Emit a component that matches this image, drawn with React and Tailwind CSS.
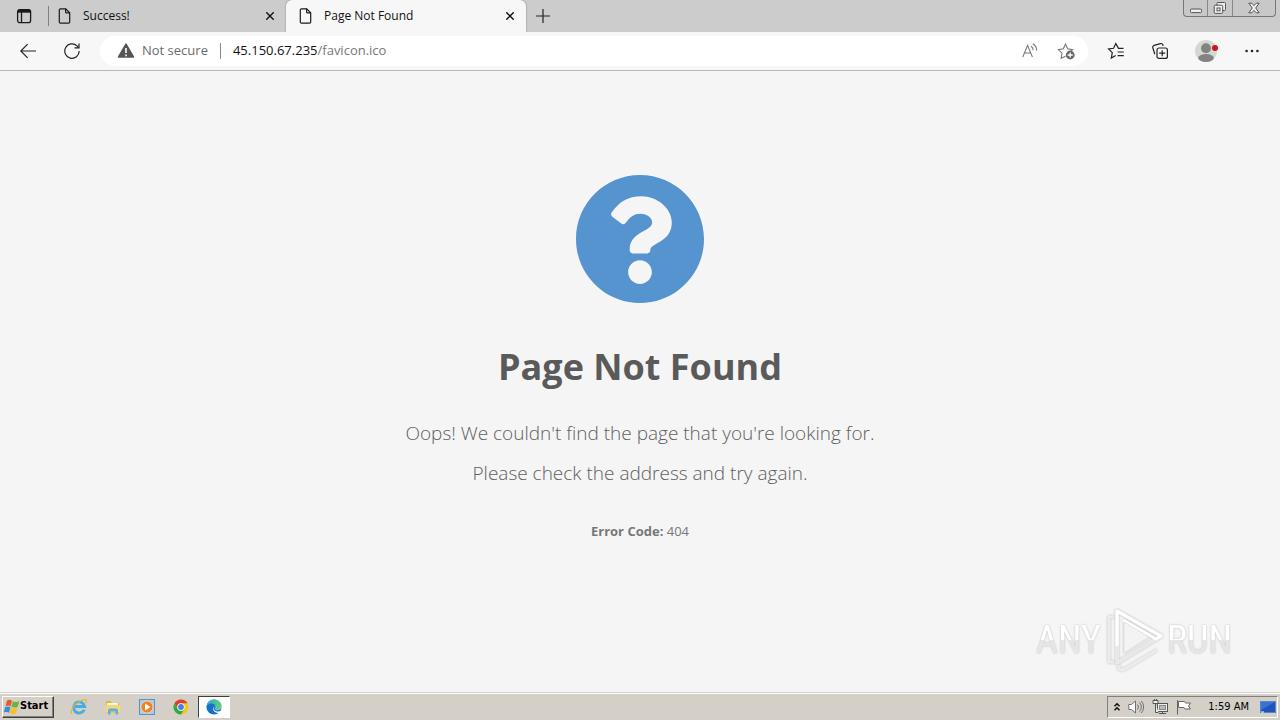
import React from "react";

const tabs = [
  { title: "Success!", active: false },
  { title: "Page Not Found", active: true },
];

function PageIcon() {
  return (
    <svg className="h-4 w-4 shrink-0" viewBox="0 0 16 16" fill="none" stroke="#1a1a1a" strokeWidth="1.2">
      <path d="M3.5.8h5.2l4 4v9.2a1.2 1.2 0 0 1-1.2 1.2h-8a1.2 1.2 0 0 1-1.2-1.2V2A1.2 1.2 0 0 1 3.5.8z" />
      <path d="M8.6.8v3.1a1 1 0 0 0 1 1h3.1" />
    </svg>
  );
}

function Tab({ title, active }) {
  return (
    <div
      className={
        active
          ? "flex h-8 w-60 items-center rounded-t-md bg-[#f7f7f7] px-2 pl-3 shadow-[0_0_2px_rgba(0,0,0,0.4)]"
          : "flex h-8 w-[237px] items-center px-2"
      }
    >
      <PageIcon />
      <span className="ml-2.5 flex-1 text-xs text-[#111]">{title}</span>
      <button aria-label={`Close ${title}`} className="flex h-4 w-4 items-center justify-center">
        <svg className="h-2 w-2" viewBox="0 0 8 8" stroke="#111" strokeWidth="1.4">
          <path d="M.3.3l7.4 7.4M7.7.3L.3 7.7" />
        </svg>
      </button>
    </div>
  );
}

function TabStrip() {
  return (
    <header className="flex h-8 items-start bg-[#cccccc]">
      <button aria-label="Tab actions" className="flex h-8 w-12 items-center justify-center">
        <svg className="h-4 w-4" viewBox="0 0 16 16" fill="none" stroke="#1a1a1a" strokeWidth="1.3">
          <rect x="1.6" y="1.6" width="13" height="13" rx="2.2" />
          <path d="M2 3.2h12.2" strokeWidth="3" />
          <path d="M5.5 4v10.4" />
        </svg>
      </button>
      <div className="mt-1.5 h-5 w-px bg-[#808080]" />
      <div className="flex">
        {tabs.map((tab) => (
          <Tab key={tab.title} {...tab} />
        ))}
      </div>
      <button aria-label="New tab" className="ml-px flex h-8 w-8 items-center justify-center">
        <svg className="h-3.5 w-3.5" viewBox="0 0 14 14" stroke="#222" strokeWidth="1.2">
          <path d="M7 0v14M0 7h14" />
        </svg>
      </button>
      <div className="ml-auto mr-1 flex h-[17px] rounded-b border border-t-0 border-[#777] bg-[#c8c8c8]">
        <button aria-label="Minimize" className="flex w-6 items-center justify-center border-r border-[#888]">
          <svg className="h-3.5 w-3.5" viewBox="0 0 14 14" fill="#eee" stroke="#555">
            <rect x="1.5" y="8" width="11" height="3.6" rx="1" />
          </svg>
        </button>
        <button aria-label="Restore" className="flex w-[25px] items-center justify-center border-r border-[#888]">
          <svg className="h-3.5 w-3.5" viewBox="0 0 14 14" fill="#eee" stroke="#555">
            <rect x="4" y="1.5" width="8.5" height="8" rx="1" />
            <rect x="1.2" y="4.2" width="8.5" height="8.2" rx="1" />
            <rect x="4" y="7" width="3" height="2.8" />
          </svg>
        </button>
        <button aria-label="Close window" className="flex w-[42px] items-center justify-center">
          <svg className="h-3 w-3" viewBox="0 0 12 12" fill="#eee" stroke="#555">
            <path d="M.8 1.2h3L6 3.6l2.2-2.4h3L7.7 6l3.5 4.8h-3L6 8.4l-2.2 2.4h-3L4.3 6z" />
          </svg>
        </button>
      </div>
    </header>
  );
}

function Toolbar() {
  return (
    <div className="flex h-[39px] items-center border-b border-[#b8b8b8] bg-[#f7f7f7]">
      <button aria-label="Back" className="ml-3 flex h-8 w-8 items-center justify-center">
        <svg className="h-4 w-4" viewBox="0 0 16 16" fill="none" stroke="#222" strokeWidth="1.2">
          <path d="M16 8H.8M7.6 1.2L.8 8l6.8 6.8" />
        </svg>
      </button>
      <button aria-label="Refresh" className="ml-3 flex h-8 w-8 items-center justify-center">
        <svg className="h-4 w-4" viewBox="0 0 16 16" fill="none" stroke="#222" strokeWidth="1.2">
          <path d="M15.2 8A7.2 7.2 0 1 1 13 2.9l1.6 1.7" />
          <path d="M15 .4v4.5h-4.5" />
        </svg>
      </button>
      <div className="ml-3 flex h-[30px] flex-1 items-center rounded-full bg-white pl-4 pr-3">
        <svg className="h-5 w-5" viewBox="0 0 20 20">
          <path d="M10 3.2L17.4 16H2.6z" fill="#555" stroke="#555" strokeWidth="1.6" strokeLinejoin="round" />
          <path d="M10 7v5M10 13.4v1.8" stroke="#fff" strokeWidth="1.6" />
        </svg>
        <span className="ml-1.5 text-[13px] text-[#6b6b6b]">Not secure</span>
        <div className="ml-3 h-4 w-px bg-[#8a8a8a]" />
        <div className="ml-3 flex-1 text-[13px] text-[#777]">
          <span className="text-[#111]">45.150.67.235</span>/favicon.ico
        </div>
        <button aria-label="Read aloud" className="flex h-5 w-5 items-center justify-center">
          <svg className="h-4 w-4" viewBox="0 0 16 16" fill="none" stroke="#777" strokeWidth="1.1">
            <path d="M.8 14L5.6 2.4 10.4 14M2.5 10h6.2" />
            <path d="M9 3.2a4.5 4.5 0 0 1 2.2 4M10.8.8a7.4 7.4 0 0 1 3.8 6.6" />
          </svg>
        </button>
        <button aria-label="Add to favorites" className="ml-4 flex h-5 w-5 items-center justify-center">
          <svg className="h-[18px] w-[18px]" viewBox="0 0 18 18" fill="none" stroke="#777" strokeWidth="1.1">
            <path d="M8.5 14.2l-4.3 2 .8-5L1.4 7.6l4.9-.8L8.5 2l2.2 4.8 4.9.8-1.6 1.6" />
            <circle cx="13.2" cy="13" r="4.4" fill="#666" stroke="none" />
            <path d="M13.2 10.4v5.2M10.6 13h5.2" stroke="#fff" strokeWidth="1.3" />
          </svg>
        </button>
      </div>
      <div className="mx-3 flex items-center gap-3">
        <button aria-label="Favorites" className="flex h-8 w-8 items-center justify-center">
          <svg className="h-[18px] w-[18px]" viewBox="0 0 18 18" fill="none" stroke="#222" strokeWidth="1.2">
            <path d="M16.5 6.4h-5L8.8 1.6 6.6 6.3l-5 .7 3.7 3.6-1 5.4 4.4-2.5" />
            <path d="M10.6 10h6.2M10.6 13.6h6.2" />
          </svg>
        </button>
        <button aria-label="Collections" className="flex h-8 w-8 items-center justify-center">
          <svg className="h-[18px] w-[18px]" viewBox="0 0 18 18" fill="none" stroke="#222" strokeWidth="1.2">
            <rect x="6" y="6" width="10.4" height="10.4" rx="2" />
            <path d="M11.2 8.2v6M8.2 11.2h6" />
            <path d="M3.8 12.2l-2-6.4a2 2 0 0 1 1.4-2.5l6.2-1.7a2 2 0 0 1 2.5 1.4l.2.9" />
          </svg>
        </button>
        <button aria-label="Profile" className="ml-0.5 flex h-8 w-8 items-center justify-center">
          <svg className="h-6 w-6" viewBox="0 0 24 24">
            <circle cx="12" cy="12" r="11" fill="#d3d8d3" />
            <circle cx="12" cy="9.2" r="5" fill="#858381" />
            <ellipse cx="12" cy="19" rx="7.8" ry="4" fill="#858381" />
            <circle cx="21" cy="9" r="3" fill="#d4101c" />
          </svg>
        </button>
        <button aria-label="Settings and more" className="ml-0.5 flex h-8 w-8 items-center justify-center">
          <svg className="h-4 w-4" viewBox="0 0 16 16" fill="#222">
            <circle cx="2.6" cy="8" r="1.3" />
            <circle cx="8" cy="8" r="1.3" />
            <circle cx="13.4" cy="8" r="1.3" />
          </svg>
        </button>
      </div>
    </div>
  );
}

function Watermark() {
  return (
    <div className="absolute bottom-5 right-12 flex items-center gap-1 font-['Liberation_Sans_Narrow','Roboto_Condensed','Liberation_Sans',sans-serif] text-[38px] leading-12 drop-shadow-[0_0_1px_rgba(0,0,0,0.22)]">
      <span className="bg-linear-to-b from-white from-50% to-[#e6e6e6] to-50% bg-clip-text text-transparent">ANY</span>
      <svg className="h-16 w-[58px]" viewBox="0 0 58 64" fill="none" strokeLinejoin="round">
        <path d="M9 9H4v45h5M14 57v4l4 1 34-20" stroke="#ececec" strokeWidth="3" />
        <path d="M12 3v52l44-27z" stroke="#e8e8e8" strokeWidth="4" />
        <path d="M12 38V3l44 25-5 3-33-19" stroke="#fff" strokeWidth="3" />
        <path d="M19 14v31l25-16z" fill="#f3f3f3" stroke="#e2e2e2" />
      </svg>
      <span className="bg-linear-to-b from-white from-50% to-[#e6e6e6] to-50% bg-clip-text text-transparent">RUN</span>
    </div>
  );
}

function ErrorPage() {
  return (
    <main className="relative flex flex-1 flex-col items-center bg-[#f5f5f5] pt-26 text-center">
      <svg className="h-32 w-32" viewBox="8 8 496 496" fill="#5594cf">
        <path d="M504 256c0 136.997-111.043 248-248 248S8 392.997 8 256C8 119.083 119.043 8 256 8s248 111.083 248 248zM262.655 90c-54.497 0-89.255 22.957-116.549 63.758-3.536 5.286-2.353 12.415 2.715 16.258l34.699 26.31c5.205 3.947 12.621 3.008 16.665-2.122 17.864-22.658 30.113-35.797 57.303-35.797 20.429 0 45.698 13.148 45.698 32.958 0 14.976-12.363 22.667-32.534 33.976C247.128 238.528 216 254.941 216 296v4c0 6.627 5.373 12 12 12h56c6.627 0 12-5.373 12-12v-1.333c0-28.462 83.186-29.647 83.186-106.667 0-58.002-60.165-102-116.531-102zM256 338c-25.365 0-46 20.635-46 46 0 25.364 20.635 46 46 46s46-20.636 46-46c0-25.365-20.635-46-46-46z" />
      </svg>
      <h1 className="mt-9 text-4xl font-bold leading-14 text-[#5a5a5a]">Page Not Found</h1>
      <p className="mt-[18px] text-[19px] font-light leading-10 text-[#606060]">
        Oops! We couldn't find the page that you're looking for.
        <br />
        Please check the address and try again.
      </p>
      <p className="mt-7 text-[13px] leading-5 text-[#777]">
        <b>Error Code:</b> 404
      </p>
      <Watermark />
    </main>
  );
}

function WindowsLogo() {
  return (
    <svg className="h-4 w-4 shrink-0" viewBox="0 0 16 16">
      <path d="M3 1.500c2-1 3.600-.8 5 .2L6.600 7.300C5.300 6.400 3.600 6.300 1.500 7.200z" fill="#e8592b" />
      <path d="M8.800 2.200c1.600.9 3.800 1 6.500.1l-1.600 5.600c-2.300.9-4.400.8-6.300-.2z" fill="#6db33f" />
      <path d="M1.200 8c1.900-.8 3.800-.8 5.300.2l-1.500 5.600c-1.500-.9-3.200-1-5.400-.2z" fill="#3a8bdc" />
      <path d="M7.200 8.600c1.800 1 4 1 6.300.2l-1.600 5.600c-2.300.9-4.400.8-6.300-.2z" fill="#f5c02c" />
    </svg>
  );
}

function Taskbar() {
  return (
    <footer className="flex h-7 items-center border-t border-[#d4d0c8] bg-[#d4d0c8] px-0.5 font-['DejaVu_Sans_Condensed','Liberation_Sans',sans-serif] shadow-[inset_0_1px_0_#fff]">
      <button className="flex h-[22px] w-[52px] items-center border border-b-[#404040] border-l-white border-r-[#404040] border-t-white px-px text-[11px] font-bold text-black shadow-[inset_-1px_-1px_0_#808080]">
        <WindowsLogo />
        Start
      </button>
      <nav className="ml-2 flex items-center">
        <button aria-label="Internet Explorer" className="flex h-[22px] w-[34px] items-center justify-center">
          <svg className="h-[18px] w-[18px]" viewBox="0 0 18 18" fill="none">
            <path d="M14.300 11.800a5.600 5.600 0 1 1 .4-3.300H5" stroke="#45aee4" strokeWidth="2.800" />
            <path d="M1.800 15.800C-.5 13 4 6.500 9.500 3.500c4-2.300 7-2.500 7-.5 0 .8-.3 1.600-.7 2.300" stroke="#e2b53b" strokeWidth="1.200" />
          </svg>
        </button>
        <button aria-label="File Explorer" className="flex h-[22px] w-[34px] items-center justify-center">
          <svg className="h-[18px] w-[18px]" viewBox="0 0 18 18">
            <path d="M2 3h5l1 2h7v10H2z" fill="#dcb64a" />
            <path d="M3 5h11v4H3z" fill="#fff6ce" />
            <path d="M1.500 7h15v7.500h-15z" fill="#f3d778" />
            <path d="M4 16.500v-4a2 2 0 0 1 2-2h6a2 2 0 0 1 2 2v4h-2.500v-3h-5v3z" fill="#64aede" />
          </svg>
        </button>
        <button aria-label="Media Player" className="flex h-[22px] w-[34px] items-center justify-center">
          <svg className="h-[18px] w-[18px]" viewBox="0 0 18 18">
            <rect x="1.500" y="1.500" width="15" height="15" fill="#a9cbea" stroke="#5c92c6" />
            <circle cx="9" cy="9" r="6" fill="#f0831e" stroke="#fff" strokeWidth=".5" />
            <path d="M7 5.500v7L12.500 9z" fill="#fff" />
          </svg>
        </button>
        <button aria-label="Chrome" className="flex h-[22px] w-[34px] items-center justify-center">
          <svg className="h-4 w-4" viewBox="0 0 16 16">
            <circle cx="8" cy="8" r="7.500" fill="#f7c51e" />
            <path d="M1.500 4.250A7.500 7.500 0 0 1 14.500 4.250H8A3.750 3.750 0 0 0 4.750 9.880z" fill="#e33b2e" />
            <path d="M1.500 4.250A7.500 7.500 0 0 0 8 15.500l3.250-5.620A3.750 3.750 0 0 1 4.750 9.880z" fill="#2da94f" />
            <circle cx="8" cy="8" r="3.700" fill="#fff" />
            <circle cx="8" cy="8" r="2.900" fill="#3f7fe8" />
          </svg>
        </button>
        <button
          aria-label="Microsoft Edge"
          className="flex h-[22px] w-8 items-center justify-center border border-b-white border-l-[#404040] border-r-white border-t-[#404040] bg-white"
        >
          <svg className="h-4 w-4" viewBox="0 0 16 16">
            <defs>
              <linearGradient id="edgeTop" x1="0" x2="1">
                <stop offset="0" stopColor="#2aa9e0" />
                <stop offset="1" stopColor="#62d36a" />
              </linearGradient>
            </defs>
            <circle cx="8" cy="8" r="7.600" fill="#1272c4" />
            <path d="M.5 7.500C1 3.500 4 .4 8 .4c4.400 0 7.600 3 7.600 6.600 0 2.300-1.700 3.800-3.900 3.800-1.700 0-2.500-.6-2.500-1.100 0-.4.8-.8.8-2C10 5.800 8 4.400 5.500 4.400 3 4.400 1 5.800.5 7.500z" fill="url(#edgeTop)" />
            <path d="M8.200 7c-1 1-1 4.500 2 5.300 2 .6 3.700.1 5-.8l1 1-1.500 2.300-3-.8C8 13.500 5.500 9.500 8.200 7z" fill="#fff" />
            <path d="M8.200 7c1-.5 2 .2 1.800 1.200-.2.800-.8 1-.8 1.500 0 .7 1.200 1.100 2.500 1.100 2.200 0 3.900-1.500 3.900-3.800" stroke="#fff" strokeWidth=".4" fill="none" />
          </svg>
        </button>
      </nav>
      <div className="ml-auto flex h-[22px] items-center border border-b-white border-l-[#808080] border-r-white border-t-[#808080] pl-1">
        <button aria-label="Show hidden icons" className="flex h-5 w-2.5 items-center justify-center">
          <svg className="h-2.5 w-2" viewBox="0 0 8 10" fill="none" stroke="#111" strokeWidth="1.500">
            <path d="M1.500 4.300L4 1.800l2.500 2.500M1.500 8.300L4 5.800l2.500 2.500" />
          </svg>
        </button>
        <div className="ml-1.5 flex items-center gap-2">
          <svg className="h-4 w-4" viewBox="0 0 16 16" fill="#fff" stroke="#707070">
            <path d="M.8 5.500h2.700L7.500 2v12l-4-3.500H.8z" />
            <path d="M9.500 5.500a4 4 0 0 1 0 5M11.500 3.500a6.500 6.500 0 0 1 0 9M13.300 2a9 9 0 0 1 0 12" fill="none" />
          </svg>
          <svg className="h-4 w-4" viewBox="0 0 16 16" fill="#eee" stroke="#555">
            <rect x="5.500" y="4.500" width="10" height="8" />
            <rect x="7.500" y="6.500" width="6" height="4" fill="#bbb" stroke="#888" />
            <path d="M7 14.500h7M10.500 12.500v2" />
            <path d="M1 1.500v3h5v-3zM2.500 0v2M4.500 0v2M3.500 4.500v9h3" />
          </svg>
          <svg className="h-4 w-4" viewBox="0 0 16 16" fill="#fff" stroke="#666">
            <path d="M1.500 1v14.500M2.500 2.500h6l1 1.500h5l-2 3 2 3H9L8 8.500H2.500z" />
          </svg>
        </div>
        <time className="ml-4 pt-0.5 text-[11px] text-black">1:59 AM</time>
        <svg className="ml-2.5 h-4 w-[18px]" viewBox="0 0 18 16">
          <rect x="1.500" y="2.500" width="15" height="11" fill="#1c55bb" stroke="#5687c9" />
          <path d="M2 3h14L2 11z" fill="#3674cf" />
          <path d="M2 13h3" stroke="#fff" />
        </svg>
      </div>
    </footer>
  );
}

export default function App() {
  return (
    <div className="flex h-screen flex-col font-['Open_Sans','Noto_Sans',sans-serif]">
      <TabStrip />
      <Toolbar />
      <ErrorPage />
      <Taskbar />
    </div>
  );
}
